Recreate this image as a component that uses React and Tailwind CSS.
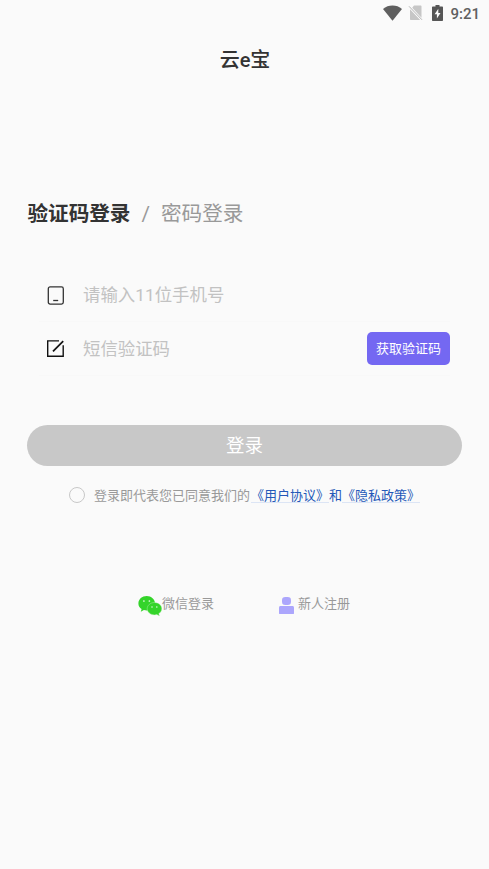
import React, { useState } from 'react';

const WifiIcon = () => (
  <svg className="w-[19px] h-[16px]" viewBox="0 0 19 16" fill="#5f5f5f">
    <path d="M0 3.900C2.700 1.700 5.900 0.500 9.500 0.500s6.800 1.200 9.500 3.400L9.500 15.700z" />
  </svg>
);

const NoSimIcon = () => (
  <svg className="w-[15px] h-[16px]" viewBox="0 0 15 16">
    <path d="M6 0.500h6.500c.6 0 1 .4 1 1V12.800L4.200 2.700zM2 4.200l10.200 10.800H3c-.6 0-1-.4-1-1z" fill="#c6c6c6" />
    <path d="M1 1.300l13 13.500" stroke="#b4b4b4" strokeWidth="1" />
  </svg>
);

const BatteryIcon = () => (
  <svg className="w-[11px] h-[16px]" viewBox="0 0 11 16">
    <path d="M3.500 0h4v1.500H10c.6 0 1 .4 1 1V15c0 .6-.4 1-1 1H1c-.6 0-1-.4-1-1V2.500c0-.6.4-1 1-1h2.500z" fill="#565656" />
    <path d="M6.300 3.700L2.600 9.300h2.300v4.200l3.600-5.600H6.300z" fill="#fafafa" />
  </svg>
);

const PhoneIcon = () => (
  <svg className="w-[17px] h-[19px]" viewBox="0 0 17 19" fill="none" stroke="#333" strokeWidth="1.300">
    <rect x="1.300" y="0.900" width="15" height="17.200" rx="1.800" />
    <path d="M6.200 14.500h5" />
  </svg>
);

const EditIcon = () => (
  <svg className="w-[17px] h-[17px]" viewBox="0 0 17 17" fill="none" stroke="#111" strokeWidth="1.400">
    <path d="M12 0.900H0.700V16.200H16.200V5.200" />
    <path d="M6 11.400L16.200 1.200" strokeWidth="1.700" />
  </svg>
);

const WechatIcon = () => (
  <svg className="w-[24px] h-[20px]" viewBox="0 0 24 20">
    <path
      d="M8.700 0.100C4.100 0.100 0.400 3.300 0.400 7.400c0 2.300 1.200 4.300 3.200 5.600l-.8 2.700 3.100-1.600c1 .3 2 .4 3 .4 4.500 0 8.100-3.200 8.100-7.100S13.300.1 8.700.1z"
      fill="#34d42a"
    />
    <path
      d="M16.500 6.500c-4 0-7.300 2.800-7.300 6.200s3.300 6.200 7.300 6.200c.8 0 1.600-.1 2.300-.3l2.700 1.300-.7-2.300c1.800-1.100 3-2.900 3-4.900C23.800 9.300 20.500 6.500 16.500 6.500z"
      fill="#34d42a"
      stroke="#c9f3c6"
      strokeWidth="0.400"
    />
    <g fill="#e6fae4">
      <circle cx="5.900" cy="5" r="0.850" />
      <circle cx="11.400" cy="5" r="0.850" />
      <circle cx="14" cy="11" r="0.750" />
      <circle cx="18.800" cy="11" r="0.750" />
    </g>
  </svg>
);

const UserIcon = () => (
  <svg className="w-[15px] h-[18px]" viewBox="0 0 15 18" fill="#aca6fc">
    <rect x="3" y="0" width="9" height="8" rx="3.300" />
    <path d="M1.500 9h12c.9 0 1.500.6 1.500 1.500V16.500c0 .3-.2.500-.5.500H.5c-.3 0-.5-.2-.5-.5V10.500C0 9.600.6 9 1.500 9z" />
  </svg>
);

export default function App() {
  const [phone, setPhone] = useState('');
  const [code, setCode] = useState('');
  const [agreed, setAgreed] = useState(false);

  return (
    <div className="w-full h-[869px] overflow-hidden bg-[#fafafa] font-['Roboto','Noto_Sans_CJK_SC',sans-serif]">
      {/* Status bar */}
      <div className="flex items-center justify-end h-[26px] pr-[9px]">
        <WifiIcon />
        <span className="ml-[6px]"><NoSimIcon /></span>
        <span className="ml-[9px]"><BatteryIcon /></span>
        <span className="ml-[7px] pt-[2px] text-[15px] leading-5 font-medium text-[#606060]">9:21</span>
      </div>

      <h1 className="mt-[19px] h-[30px] pl-px text-center text-[20px] leading-[30px] font-medium text-[#333]">云e宝</h1>

      {/* Login mode */}
      <div className="mt-[124px] h-[30px] flex items-center pl-[27.500px] text-[20.600px] leading-[30px] whitespace-pre">
        <button className="font-bold text-[#333]">验证码登录</button>
        <span className="w-[30.500px] text-center text-[#999]">/</span>
        <button className="text-[#999]">密码登录</button>
      </div>

      <form className="mx-[27px]" onSubmit={(e) => e.preventDefault()}>
        <div className="mt-[40px] mx-3 h-[53px] flex items-center border-b border-[#f8f8f8] pl-2">
          <PhoneIcon />
          <input
            type="tel"
            value={phone}
            onChange={(e) => setPhone(e.target.value)}
            placeholder="请输入11位手机号"
            className="ml-[19px] w-[260px] h-[30px] text-[17.400px] bg-transparent outline-none text-[#333] placeholder:text-[#c2c2c2]"
          />
        </div>
        <div className="mx-3 h-[54px] flex items-center border-b border-[#f8f8f8] pl-2">
          <EditIcon />
          <input
            type="text"
            value={code}
            onChange={(e) => setCode(e.target.value)}
            placeholder="短信验证码"
            className="ml-[19px] w-[220px] h-[30px] text-[17.400px] bg-transparent outline-none text-[#333] placeholder:text-[#c2c2c2]"
          />
          <button type="button" className="ml-auto w-[83px] h-[33px] rounded-[5px] bg-[#7468f2] text-[13px] text-white">
            获取验证码
          </button>
        </div>
        <button type="submit" className="mt-[49px] w-full h-[41px] pt-0.5 rounded-full bg-[#c8c8c8] text-[18.500px] text-white">
          登录
        </button>
      </form>

      {/* Agreement */}
      <div className="mt-[20px] h-5 flex items-center pl-[69px] text-[13px] leading-5 whitespace-nowrap text-[#999]">
        <button
          onClick={() => setAgreed(!agreed)}
          aria-label="同意协议"
          className={`w-4 h-4 mr-[9px] mb-0.5 rounded-full border ${agreed ? 'border-[#7468f2] bg-[#7468f2]' : 'border-[#c8c8c8]'}`}
        />
        <span>登录即代表您已同意我们的</span>
        <span className="flex pl-px leading-[13px] text-[#2458b8]">
          <a className="border-b border-[#dce5f5]">《用户协议》</a>
          <span>和</span>
          <a className="border-b border-[#dce5f5]">《隐私政策》</a>
        </span>
      </div>

      {/* Other entries */}
      <div className="mt-[88px] flex pl-[138px] text-[13px] leading-5 text-[#999]">
        <button className="flex">
          <span className="mt-[2px]"><WechatIcon /></span>
          <span>微信登录</span>
        </button>
        <button className="flex ml-[65px]">
          <span className="mt-[3px] mr-1"><UserIcon /></span>
          <span>新人注册</span>
        </button>
      </div>
    </div>
  );
}
